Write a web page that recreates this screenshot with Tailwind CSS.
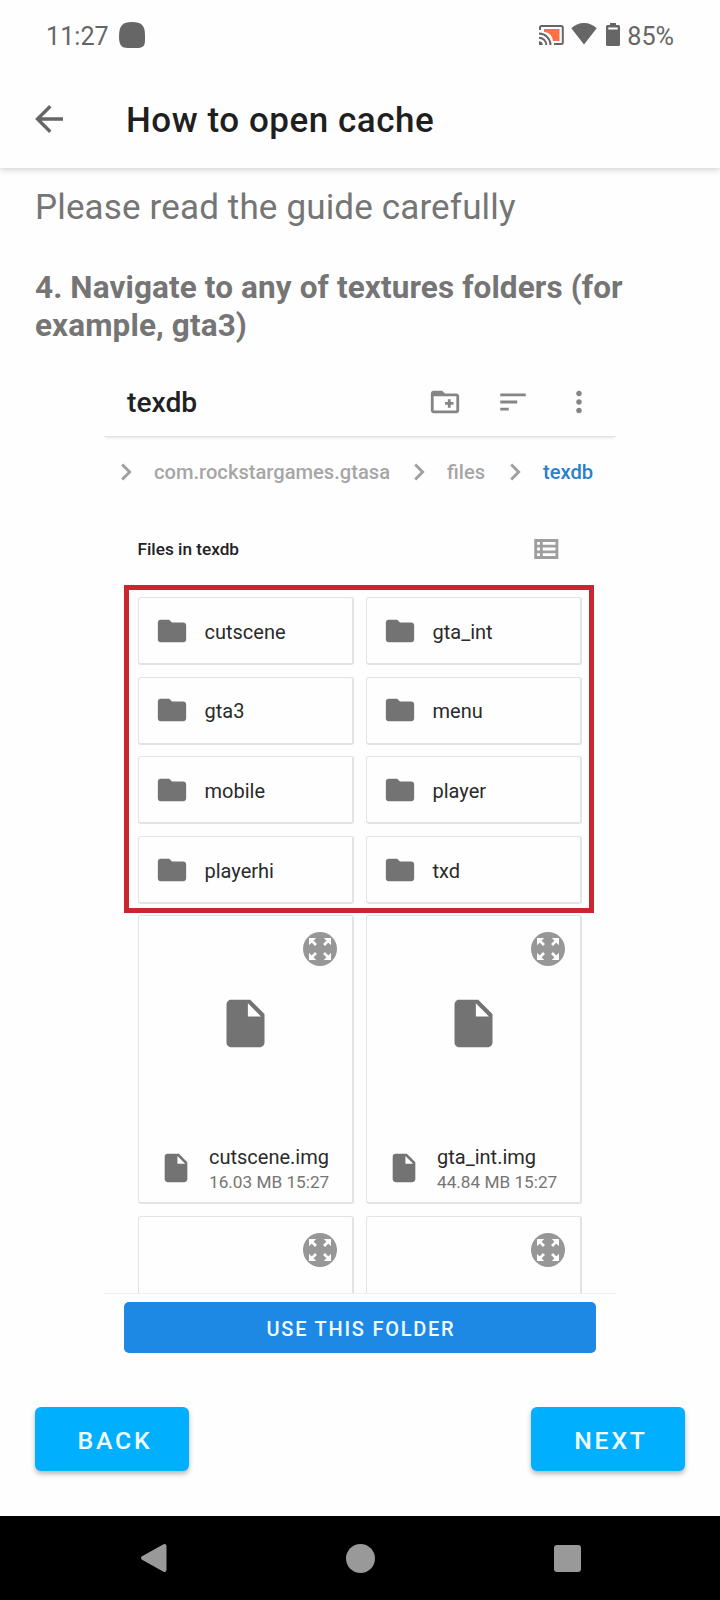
<!DOCTYPE html>
<html lang="en">
<head>
<meta charset="utf-8">
<title>How to open cache</title>
<script src="https://cdn.jsdelivr.net/npm/@tailwindcss/browser@4"></script>
</head>
<body class="bg-[#fefefe]">
<svg class="hidden">
  <symbol id="folder" viewBox="0 0 24 24"><path d="M10 4H4c-1.1 0-1.99.9-1.99 2L2 18c0 1.1.9 2 2 2h16c1.1 0 2-.9 2-2V8c0-1.1-.9-2-2-2h-8l-2-2z"/></symbol>
  <symbol id="file" viewBox="0 0 24 24"><path d="M6 2c-1.100 0-1.990.9-1.990 2L4 20c0 1.100.890 2 1.990 2H18c1.100 0 2-.9 2-2V8l-6-6H6zm7 7V3.500L18.500 9H13z"/></symbol>
  <symbol id="chevron" viewBox="0 0 24 24"><path d="M10 6 8.590 7.410 13.170 12l-4.580 4.590L10 18l6-6z"/></symbol>
  <symbol id="expand" viewBox="0 0 34 34">
    <circle cx="17" cy="17" r="17" fill="#979797"/>
    <g fill="#fff" stroke="#fff" stroke-width="2.700">
      <path stroke="none" d="M6 6h7.200L6 13.200zM28 6v7.200L20.800 6zM6 28v-7.200L13.200 28zM28 28h-7.200L28 20.800z"/>
      <path d="M8 8l5 5M26 8l-5 5M8 26l5-5M26 26l-5-5"/>
    </g>
  </symbol>
</svg>
<div class="flex h-[1600px] w-[720px] flex-col overflow-hidden font-['Roboto',sans-serif]">

  <!-- Status bar -->
  <div class="relative z-10 flex h-[72px] shrink-0 items-center justify-between bg-[#fefefe] pr-[46px] pl-[46px] text-[25.200px] leading-[30px] text-[#666]">
    <div class="flex items-center">
      <span class="w-[73px] pt-[1px]">11:27</span>
      <svg class="-mt-[2px] size-[26px]" viewBox="0 0 26 26"><path fill="#666" d="M13 0C22.500 0 26 3.500 26 13v5c0 6-2 8-8 8H9c-6.500 0-9-3-9-11C0 4 3 0 13 0z"/></svg>
    </div>
    <div class="flex items-center">
      <svg class="-mt-[2px] mr-[7px] h-[20px] w-[25px]" viewBox="0 0 25 20">
        <path fill="#ff7043" d="M5 4h15.500v12H14C13.500 11 10.500 7.500 5 6.800z"/>
        <g fill="none" stroke="#666" stroke-width="2"><path d="M1 5V2.500Q1 1 2.500 1H22Q23.800 1 23.800 2.500V17.500Q23.800 19 22 19H15"/><path d="M0 8.500A11.500 11.500 0 0 1 11.500 20M0 12.700A7.300 7.300 0 0 1 7.300 20"/></g>
        <path fill="#666" d="M0 16.200A3.800 3.800 0 0 1 3.800 20H0z"/>
      </svg>
      <svg class="-mt-[4px] mr-[9px] h-[22px] w-[26px]" viewBox="0 0 26 22"><path fill="#666" d="M13 0c5 0 9.200 2 12.700 5.300L13 21.600.3 5.300C3.800 2 8 0 13 0z"/></svg>
      <svg class="-mt-[3px] mr-[7px] h-[23px] w-[14px]" viewBox="0 0 14 23"><path fill="#666" fill-rule="evenodd" d="M4 0h6v2h2.500Q14 2 14 3.500v18Q14 23 12.500 23h-11Q0 23 0 21.500v-18Q0 2 1.500 2H4zM2.300 4.600v2h9.400v-2z"/></svg>
      <span class="pt-[1px]">85%</span>
    </div>
  </div>

  <!-- App bar -->
  <div class="flex h-[96px] shrink-0 items-center pl-[35px] shadow-[0_1px_7px_rgba(0,0,0,0.220)]">
    <svg class="-mt-[3px] mr-[63px] size-[28px]" viewBox="0 0 28 28" fill="none" stroke="#666" stroke-width="3.400"><path d="M28 14H3M15.300 1.200 2.500 14 15.300 26.800"/></svg>
    <h1 class="pt-[2px] text-[35px] font-medium tracking-[0.530px] text-[#1f1f1f]">How to open cache</h1>
  </div>

  <p class="pt-[1px] pl-[35px] text-[35px] leading-[78px] tracking-[0.150px] text-[#757575]">Please read the guide carefully</p>
  <h2 class="mt-[22px] w-[640px] pl-[35px] text-[31.500px] leading-[38px] font-bold tracking-[0.110px] text-[#757575]">4. Navigate to any of textures folders (for example, gta3)</h2>

  <!-- File manager panel -->
  <div class="mt-[23px] ml-[104px] flex w-[512px] shrink-0 flex-col">
    <div class="flex h-[69px] items-center border-b border-[#e2e2e2] pr-[23px] pl-[23px] shadow-[0_3px_3px_-2px_rgba(0,0,0,0.100)]">
      <span class="mt-[3px] flex-1 text-[28.200px] font-medium text-[#202124]">texdb</span>
      <svg class="mr-[34px] size-[34px]" viewBox="0 0 24 24" fill="#858585"><path d="M20 6h-8l-2-2H4c-1.110 0-1.990.890-1.990 2L2 18c0 1.110.890 2 2 2h16c1.110 0 2-.890 2-2V8c0-1.110-.890-2-2-2zm0 12H4V8h16v10zm-8-4h2v2h2v-2h2v-2h-2v-2h-2v2h-2z"/></svg>
      <svg class="mr-[32px] size-[34px]" viewBox="0 0 24 24" fill="#858585"><path d="M3 18h6v-2H3v2zM3 6v2h18V6H3zm0 7h12v-2H3v2z"/></svg>
      <svg class="-mr-[3px] size-[34px]" viewBox="0 0 24 24" fill="#858585"><path d="M12 8c1.100 0 2-.9 2-2s-.9-2-2-2-2 .9-2 2 .9 2 2 2zm0 2c-1.100 0-2 .9-2 2s.9 2 2 2 2-.9 2-2-.9-2-2-2zm0 6c-1.100 0-2 .9-2 2s.9 2 2 2 2-.9 2-2-.9-2-2-2z"/></svg>
    </div>
    <div class="flex h-[70px] items-center pl-[5px] text-[20.150px] font-medium text-[#a6a6a6]">
      <svg class="size-[34px]" viewBox="0 0 24 24" fill="#9e9e9e"><use href="#chevron"/></svg>
      <span class="w-[259px] pl-[11px]">com.rockstargames.gtasa</span>
      <svg class="size-[34px]" viewBox="0 0 24 24" fill="#9e9e9e"><use href="#chevron"/></svg>
      <span class="w-[62px] pl-[11px]">files</span>
      <svg class="size-[34px]" viewBox="0 0 24 24" fill="#9e9e9e"><use href="#chevron"/></svg>
      <span class="pl-[11px] text-[#2b7fc9]">texdb</span>
    </div>
    <div class="flex h-[83px] items-center justify-between pr-[52px] pl-[33.500px] text-[17.200px] font-medium text-[#202124]">
      <span class="pt-[2px]">Files in texdb</span>
      <svg class="size-[34px]" viewBox="0 0 24 24" fill="#9e9e9e"><path d="M3 5v14h17V5H3zm4 2v2H5V7h2zm-2 6v-2h2v2H5zm0 2h2v2H5v-2zm13 2H9v-2h9v2zm0-4H9v-2h9v2zm0-4H9V7h9v2z"/></svg>
    </div>

    <div class="relative">
      <div class="flex h-[704px] flex-col gap-[11px] overflow-hidden border-b border-[#f0f0f0] px-[34px] pt-[7px]">
        <div id="folders" class="grid shrink-0 grid-cols-2 gap-x-[12px] gap-y-[11.700px]"></div>
        <div id="files" class="grid shrink-0 grid-cols-2 gap-[12px]"></div>
      </div>
      <div class="absolute -top-[5px] left-[20px] h-[328px] w-[470px] border-[5px] border-[#cb2630]"></div>
    </div>

    <div class="mt-[8px] ml-[20px] flex h-[51px] w-[472px] items-center justify-center rounded-[5px] bg-[#1e88e5] pt-[2px] pl-[2px] text-[20px] font-medium tracking-[1.750px] text-[#f0fbff]">USE THIS FOLDER</div>
  </div>

  <!-- Step buttons -->
  <div class="mt-[54px] flex shrink-0 justify-between px-[35px] text-[24.800px] font-medium tracking-[2.800px] text-[#f0fdff]">
    <div class="flex h-[64px] w-[154px] items-center justify-center rounded-[6px] bg-[#00b0ff] pt-[3px] pl-[6px] shadow-[0_3px_5px_rgba(0,0,0,0.280)]">BACK</div>
    <div class="flex h-[64px] w-[154px] items-center justify-center rounded-[6px] bg-[#00b0ff] pt-[3px] pl-[6px] shadow-[0_3px_5px_rgba(0,0,0,0.280)]">NEXT</div>
  </div>

  <!-- Navigation bar -->
  <div class="mt-auto flex h-[84px] shrink-0 items-center justify-between bg-black pr-[139.500px] pl-[139.500px]">
    <svg class="h-[30px] w-[27px]" viewBox="0 0 27 30"><path fill="#999" stroke="#999" stroke-width="4" stroke-linejoin="round" d="M24.500 3v24L3 15z"/></svg>
    <div class="size-[29px] rounded-full bg-[#999]"></div>
    <div class="size-[27px] rounded-[3px] bg-[#999]"></div>
  </div>
</div>

<template id="folder-card">
  <div class="flex h-[68px] items-center rounded-[3px] border border-r-2 border-b-2 border-[#e2e3e5] pl-[16px]">
    <svg class="size-[34px]" fill="#737373"><use href="#folder"/></svg>
    <span class="pt-[2px] pl-[15.500px] text-[20px] text-[#2a2a2a]"></span>
  </div>
</template>
<template id="file-card">
  <div class="relative flex h-[288.500px] flex-col justify-between rounded-[3px] border border-r-2 border-b-2 border-[#e2e3e5]">
    <svg class="absolute top-[16px] right-[15px] size-[34px]"><use href="#expand"/></svg>
    <svg class="mt-[79px] ml-[78px] size-[57px]" fill="#737373"><use href="#file"/></svg>
    <div class="mb-[7px] flex items-center pl-[19.500px]">
      <svg class="-mt-[4px] size-[34px]" fill="#737373"><use href="#file"/></svg>
      <div class="pl-[16.500px]">
        <div class="name text-[20px] leading-[25px] text-[#2a2a2a]"></div>
        <div class="meta text-[17.200px] leading-[25px] text-[#757575]"></div>
      </div>
    </div>
  </div>
</template>
<template id="peek-card">
  <div class="relative h-[288px] rounded-[3px] border border-r-2 border-b-2 border-[#e2e3e5]">
    <svg class="absolute top-[16px] right-[15px] size-[34px]"><use href="#expand"/></svg>
  </div>
</template>
<script>
  const clone = id => document.getElementById(id).content.firstElementChild.cloneNode(true);
  const folders = document.getElementById('folders');
  for (const name of ['cutscene', 'gta_int', 'gta3', 'menu', 'mobile', 'player', 'playerhi', 'txd']) {
    const card = clone('folder-card');
    card.querySelector('span').textContent = name;
    folders.append(card);
  }
  const files = document.getElementById('files');
  for (const [name, meta] of [['cutscene.img', '16.03 MB 15:27'], ['gta_int.img', '44.84 MB 15:27']]) {
    const card = clone('file-card');
    card.querySelector('.name').textContent = name;
    card.querySelector('.meta').textContent = meta;
    files.append(card);
  }
  files.append(clone('peek-card'), clone('peek-card'));
</script>
</body>
</html>
